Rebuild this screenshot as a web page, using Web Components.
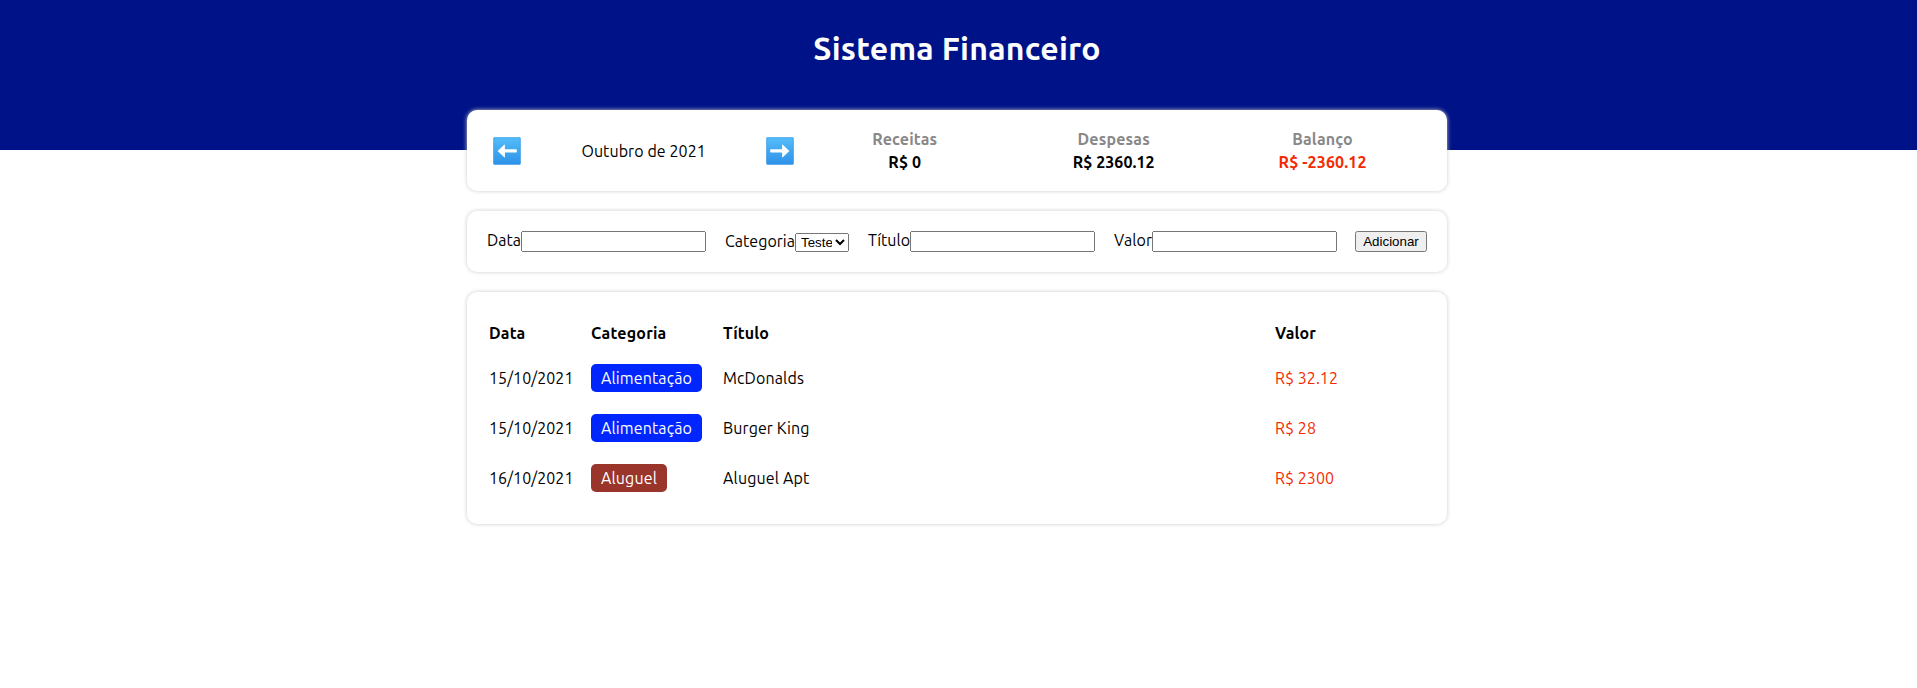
<!DOCTYPE html>
<html lang="pt-BR">
<head>
<meta charset="utf-8">
<title>Sistema Financeiro</title>
<style>
html,body{margin:0;background:#fff}
body{min-height:100vh;font:16px/18px Ubuntu,"Noto Sans",sans-serif;color:#000}
</style>
</head>
<body>
<finance-app></finance-app>
<script>
const define=(name,html,setup)=>customElements.define(name,class extends HTMLElement{
  connectedCallback(){
    if(this.shadowRoot)return;
    this.attachShadow({mode:"open"}).innerHTML=html;
    if(setup)setup(this,this.shadowRoot);
  }
});

/* Text run whose tracking is adjusted to a given width */
define("text-run",`<style>:host{display:inline-block;white-space:nowrap;flex:none;text-align:left;vertical-align:top}span{display:inline-block;vertical-align:top}</style><span><slot></slot></span>`,(el,root)=>{
  const w=+el.getAttribute("w"),s=root.querySelector("span");
  el.style.width=w+"px";
  s.style.letterSpacing=(w-s.getBoundingClientRect().width)/el.textContent.length+"px";
});

define("panel-card",`<style>:host{display:block;box-sizing:border-box;background:#fff;border-radius:10px;padding:20px;box-shadow:0 0 4px #ccc}</style><slot></slot>`);

define("arrow-button",`<style>:host{display:flex;width:40px;justify-content:center}svg{display:block}:host([dir=right]) g{transform:scaleX(-1);transform-origin:14px 14px}</style>
<svg width="28" height="28" viewBox="0 0 28 28"><defs><linearGradient id="g" x2="0" y2="1"><stop stop-color="#55bdfb"/><stop offset="1" stop-color="#2d91e8"/></linearGradient></defs>
<rect x=".3" y=".3" width="27.4" height="27.4" rx="1.2" fill="url(#g)"/><path d="M.8 26.2V1.3Q.8.8 1.3.8h25.4q.5 0 .5.5v24.9" fill="none" stroke="#3e9fe0" stroke-opacity=".6"/>
<g><path d="M4.6 13.9 11.2 7.7q.7-.5.7.4v4.2h11.1q.8 0 .8.8v1.6q0 .8-.8.8H11.9v4.3q0 .9-.7.4Z" fill="#fff"/></g></svg>`);

define("result-item",`<style>:host{flex:1;display:flex;flex-direction:column;align-items:center;gap:5px;font-weight:700}.t{color:#888}.v{color:var(--value,#000)}</style><div class="t"><slot name="title"></slot></div><div class="v"><slot></slot></div>`);

define("info-area",`<style>:host{display:block}.row{display:flex;align-items:center;height:41px}.month{flex:1;display:flex;align-items:center;justify-content:space-between}.res{flex:2;display:flex}</style>
<panel-card><div class="row"><div class="month"><arrow-button></arrow-button><text-run w="124.5">Outubro de 2021</text-run><arrow-button dir="right"></arrow-button></div>
<div class="res">
<result-item><text-run slot="title" w="65">Receitas</text-run><text-run w="33">R$ 0</text-run></result-item>
<result-item><text-run slot="title" w="72.5">Despesas</text-run><text-run w="82">R$ 2360.12</text-run></result-item>
<result-item style="--value:#f42b00"><text-run slot="title" w="60.5">Balanço</text-run><text-run w="88">R$ -2360.12</text-run></result-item>
</div></div></panel-card>`);

define("input-area",`<style>:host{display:block}.row{display:flex;gap:19px;height:21px}label{display:flex;align-items:flex-start;flex:none}
input,select,button{box-sizing:border-box;margin:0;font:13.333px "Liberation Sans",Arial,sans-serif}input{width:185px;height:21px}select{width:54px;height:19px;margin-top:2px;padding-left:1px}button{width:72px;height:21px;padding:1px 0;margin-left:-1px;flex:none}.c text-run{margin-top:1px}</style>
<panel-card><div class="row"><label><text-run w="34">Data</text-run><input></label>
<label class="c"><text-run w="70">Categoria</text-run><select><option>Teste</option></select></label>
<label><text-run w="42">Título</text-run><input></label>
<label><text-run w="38">Valor</text-run><input></label><button>Adicionar</button></div></panel-card>`);

define("category-tag",`<style>:host{display:inline-block;padding:5px 10px;border-radius:5px;color:#fff;background:var(--tag)}slot{display:block}</style><slot></slot>`);

define("table-area",`<style>:host{display:block}.grid{display:grid;grid-template-columns:102px 132px 552px 1fr;grid-template-rows:40px repeat(3,50px);align-items:center;padding:1px 0 1px 2px}.grid>*{justify-self:start}b{display:flex}.e{color:#f42b00}</style>
<panel-card><div class="grid">
<b><text-run w="36.5">Data</text-run></b><b><text-run w="75.5">Categoria</text-run></b><b><text-run w="46">Título</text-run></b><b><text-run w="41">Valor</text-run></b>
<text-run w="84.5">15/10/2021</text-run><category-tag style="--tag:#0026ff"><text-run w="91">Alimentação</text-run></category-tag><text-run w="81">McDonalds</text-run><text-run class="e" w="63">R$ 32.12</text-run>
<text-run w="84.5">15/10/2021</text-run><category-tag style="--tag:#0026ff"><text-run w="91">Alimentação</text-run></category-tag><text-run w="86.5">Burger King</text-run><text-run class="e" w="41">R$ 28</text-run>
<text-run w="84.5">16/10/2021</text-run><category-tag style="--tag:#9a352b"><text-run w="56">Aluguel</text-run></category-tag><text-run w="86.5">Aluguel Apt</text-run><text-run class="e" w="59">R$ 2300</text-run>
</div></panel-card>`);

define("page-header",`<style>:host{display:block;height:150px;box-sizing:border-box;background:#001287;color:#fff;text-align:center;padding:29px 3px 0 0}h1{margin:0;font-size:32px;line-height:38px;font-weight:700}</style><h1><slot></slot></h1>`);

define("finance-app",`<style>:host{display:block}main{width:980px;margin:-40px auto 0;display:grid;gap:20px}.wrap{padding:0 3px 50px 0}</style>
<page-header><text-run w="287.5">Sistema Financeiro</text-run></page-header><div class="wrap"><main><info-area></info-area><input-area></input-area><table-area></table-area></main></div>`);
</script>
</body>
</html>
